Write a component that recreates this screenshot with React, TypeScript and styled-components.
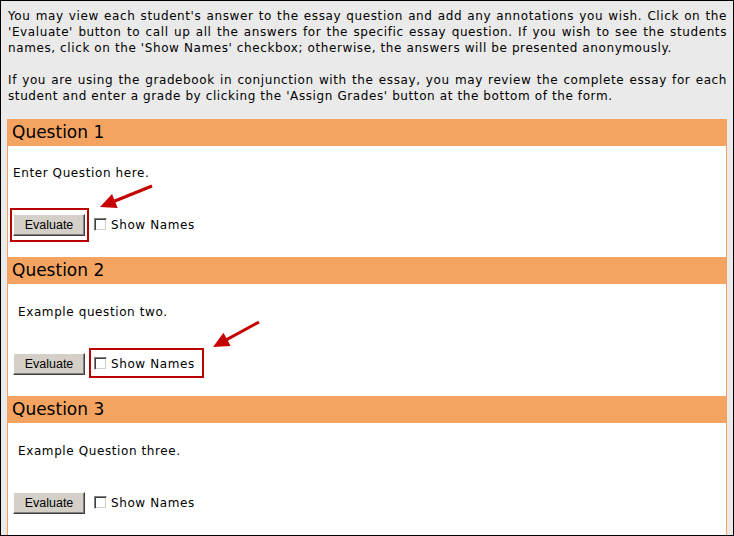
import styled, { createGlobalStyle } from 'styled-components';

const GlobalStyle = createGlobalStyle`
    html, body {
        margin: 0;
        padding: 0;
        background: #eaeaea;
    }
    body {
        font-family: "DejaVu Sans", Verdana, sans-serif;
        font-size: 12px;
        letter-spacing: 0.6px;
        color: #000;
    }
`;

interface IQuestion {
    title: string;
    text: string;
    indent: number;
    top: number;
    highlight?: 'button' | 'check';
}

const questions: IQuestion[] = [
    { title: 'Question 1', text: 'Enter Question here.', indent: 0, top: 19, highlight: 'button' },
    { title: 'Question 2', text: 'Example question two.', indent: 5, top: 20, highlight: 'check' },
    { title: 'Question 3', text: 'Example Question three.', indent: 5, top: 20 },
];

const Arrow = ({ tail, tip }: { tail: [number, number]; tip: [number, number] }) => {
    const dx = tail[0] - tip[0];
    const dy = tail[1] - tip[1];
    const len = Math.hypot(dx, dy);
    const ux = dx / len;
    const uy = dy / len;
    const headLen = 16;
    const half = 7.5;
    const bx = tip[0] + ux * headLen;
    const by = tip[1] + uy * headLen;
    const p1 = `${bx + uy * half},${by - ux * half}`;
    const p2 = `${bx - uy * half},${by + ux * half}`;
    return (
        <g>
            <line x1={tail[0]} y1={tail[1]} x2={bx - ux * 2} y2={by - uy * 2} stroke="#c40000" strokeWidth={3} />
            <polygon points={`${tip[0]},${tip[1]} ${p1} ${p2}`} fill="#c40000" />
        </g>
    );
};

const App = () => {
    return (
        <>
            <GlobalStyle />
            <Page>
                <Intro>
                    <p>
                        You may view each student's answer to the essay question and add any annotations you wish. Click on the
                        'Evaluate' button to call up all the answers for the specific essay question. If you wish to see the students
                        names, click on the 'Show Names' checkbox; otherwise, the answers will be presented anonymously.
                    </p>
                    <p>
                        If you are using the gradebook in conjunction with the essay, you may review the complete essay for each
                        student and enter a grade by clicking the 'Assign Grades' button at the bottom of the form.
                    </p>
                </Intro>
                <Panels>
                    {questions.map((q) => (
                        <Panel key={q.title}>
                            <Header>{q.title}</Header>
                            <Body>
                                <QuestionText $indent={q.indent} $top={q.top}>{q.text}</QuestionText>
                                <Controls>
                                    <Mark $on={q.highlight === 'button'} $inset="-6px -4px -6px -3px">
                                        <Button type="button">Evaluate</Button>
                                    </Mark>
                                    <Mark $on={q.highlight === 'check'} $inset="-9px -9px -6px -5px">
                                        <CheckLabel>
                                            <Check type="checkbox" />
                                            Show Names
                                        </CheckLabel>
                                    </Mark>
                                </Controls>
                            </Body>
                        </Panel>
                    ))}
                </Panels>
                <Overlay width="734" height="536" viewBox="0 0 734 536">
                    <Arrow tail={[152, 186]} tip={[100, 207]} />
                    <Arrow tail={[259, 322]} tip={[213, 347]} />
                </Overlay>
            </Page>
        </>
    );
};

const Page = styled.div`
    position: relative;
    box-sizing: border-box;
    width: 734px;
    height: 536px;
    border: 1px solid #000;
    padding: 0 6px;
    background: #eaeaea;
    overflow: hidden;
`;

const Intro = styled.div`
    padding: 7px 0 0 1px;
    text-align: justify;
    line-height: 16px;
    p {
        margin: 0 0 16px;
    }
    p:last-child {
        margin: 0;
    }
`;

const Panels = styled.div`
    margin-top: 15px;
    display: flex;
    flex-direction: column;
`;

const Panel = styled.section`
    background: #fff;
    border-left: 1px solid #f4a460;
    border-right: 1px solid #f4a460;
`;

const Header = styled.div`
    height: 27px;
    line-height: 27px;
    padding-left: 4px;
    background: #f4a460;
    font-size: 17px;
    letter-spacing: 0;
`;

const Body = styled.div`
    padding: 0 5px 21px;
`;

const QuestionText = styled.div<{ $indent: number; $top: number }>`
    margin-top: ${({ $top }) => $top}px;
    padding-left: ${({ $indent }) => $indent}px;
    line-height: 16px;
`;

const Controls = styled.div`
    display: flex;
    align-items: center;
    gap: 9px;
    height: 22px;
    margin-top: 33px;
`;

const Mark = styled.span<{ $on: boolean; $inset: string }>`
    position: relative;
    display: inline-flex;
    align-items: center;
    &::after {
        content: '';
        display: ${({ $on }) => ($on ? 'block' : 'none')};
        position: absolute;
        inset: ${({ $inset }) => $inset};
        border: 2px solid #b80000;
        pointer-events: none;
    }
`;

const Button = styled.button`
    box-sizing: border-box;
    width: 72px;
    height: 22px;
    padding: 0;
    margin: 0;
    background: #d4d0c8;
    border: 1px solid;
    border-color: #ffffff #404040 #404040 #ffffff;
    box-shadow: inset -1px -1px 0 #808080;
    font-family: "Liberation Sans", Arial, sans-serif;
    font-size: 12.5px;
    letter-spacing: 0;
    color: #000;
`;

const CheckLabel = styled.label`
    display: inline-flex;
    align-items: center;
    gap: 4px;
    height: 16px;
    margin-top: -1px;
`;

const Check = styled.input`
    appearance: none;
    box-sizing: border-box;
    width: 13px;
    height: 13px;
    margin: 0;
    background: #fff;
    border: 1px solid;
    border-color: #808080 #ffffff #ffffff #808080;
    box-shadow: inset 1px 1px 0 #404040, inset -1px -1px 0 #d4d0c8;
`;

const Overlay = styled.svg`
    position: absolute;
    left: -1px;
    top: -1px;
    pointer-events: none;
`;

export default App;
